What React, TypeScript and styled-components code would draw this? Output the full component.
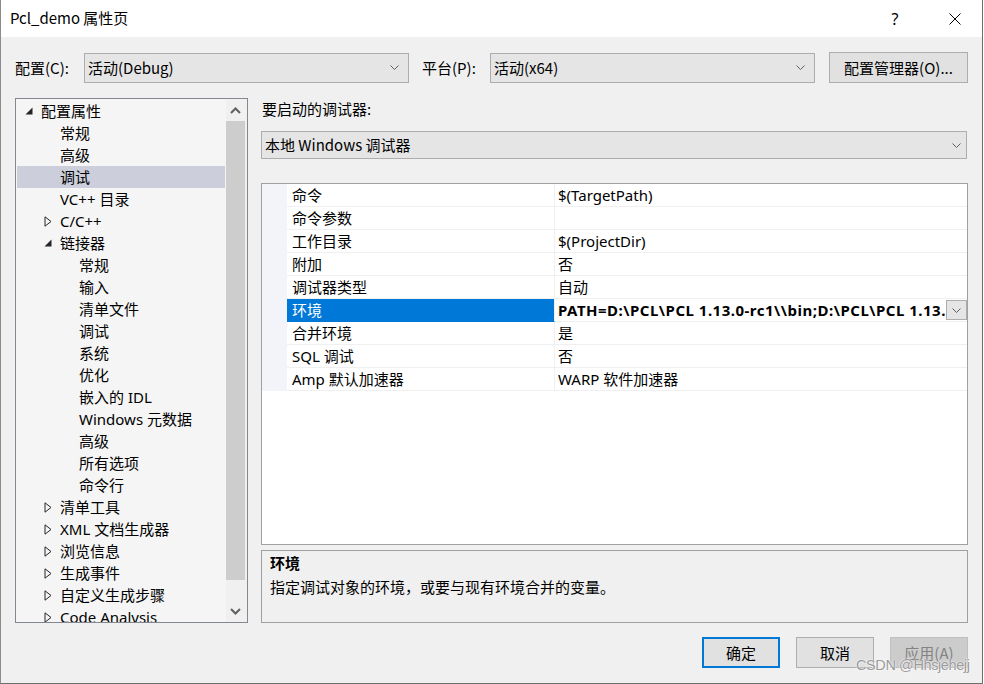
import styled, { createGlobalStyle } from "styled-components";

const GlobalStyle = createGlobalStyle`
  html, body {
    margin: 0;
    padding: 0;
  }
  body {
    width: 984px;
    height: 684px;
    overflow: hidden;
    background: #ffffff;
    font-family: "Noto Sans CJK SC", sans-serif;
    color: #000;
  }
  * {
    box-sizing: border-box;
  }
`;

type TreeNode = {
  label: string;
  level: number;
  arrow?: "open" | "closed";
  selected?: boolean;
};

const treeNodes: TreeNode[] = [
  { label: "配置属性", level: 0, arrow: "open" },
  { label: "常规", level: 1 },
  { label: "高级", level: 1 },
  { label: "调试", level: 1, selected: true },
  { label: "VC++ 目录", level: 1 },
  { label: "C/C++", level: 1, arrow: "closed" },
  { label: "链接器", level: 1, arrow: "open" },
  { label: "常规", level: 2 },
  { label: "输入", level: 2 },
  { label: "清单文件", level: 2 },
  { label: "调试", level: 2 },
  { label: "系统", level: 2 },
  { label: "优化", level: 2 },
  { label: "嵌入的 IDL", level: 2 },
  { label: "Windows 元数据", level: 2 },
  { label: "高级", level: 2 },
  { label: "所有选项", level: 2 },
  { label: "命令行", level: 2 },
  { label: "清单工具", level: 1, arrow: "closed" },
  { label: "XML 文档生成器", level: 1, arrow: "closed" },
  { label: "浏览信息", level: 1, arrow: "closed" },
  { label: "生成事件", level: 1, arrow: "closed" },
  { label: "自定义生成步骤", level: 1, arrow: "closed" },
  { label: "Code Analysis", level: 1, arrow: "closed" },
];

type Prop = { name: string; value: string; selected?: boolean; bold?: boolean };

const props: Prop[] = [
  { name: "命令", value: "$(TargetPath)" },
  { name: "命令参数", value: "" },
  { name: "工作目录", value: "$(ProjectDir)" },
  { name: "附加", value: "否" },
  { name: "调试器类型", value: "自动" },
  {
    name: "环境",
    value:
      "PATH=D:\\PCL\\PCL 1.13.0-rc1\\\\bin;D:\\PCL\\PCL 1.13.0-rc1\\\\3rdParty\\\\FLANN\\\\bin",
    selected: true,
    bold: true,
  },
  { name: "合并环境", value: "是" },
  { name: "SQL 调试", value: "否" },
  { name: "Amp 默认加速器", value: "WARP 软件加速器" },
];

const Chevron = ({ up, bold }: { up?: boolean; bold?: boolean }) => (
  <svg width={bold ? 11 : 9} height={bold ? 7 : 5} viewBox={bold ? "0 0 11 7" : "0 0 9 5"}>
    {bold ? (
      <path
        d={up ? "M1 6 L5.5 1.5 L10 6" : "M1 1 L5.5 5.5 L10 1"}
        stroke="#606060"
        strokeWidth="2"
        fill="none"
      />
    ) : (
      <path d="M0.5 0.5 L4.5 4.5 L8.5 0.5" stroke="#606060" strokeWidth="1" fill="none" />
    )}
  </svg>
);

const Arrow = ({ kind }: { kind?: "open" | "closed" }) => {
  if (kind === "open") {
    return (
      <svg width="8" height="8" viewBox="0 0 8 8">
        <polygon points="7.5,0.5 7.5,7.5 0.5,7.5" fill="#262626" />
      </svg>
    );
  }
  if (kind === "closed") {
    return (
      <svg width="8" height="11" viewBox="0 0 8 11">
        <polygon points="1,0.8 7,5.5 1,10.2" fill="none" stroke="#262626" strokeWidth="1" />
      </svg>
    );
  }
  return null;
};

const App = () => {
  return (
    <>
      <GlobalStyle />
      <Window>
        <TitleBar>
          <Title>Pcl_demo 属性页</Title>
          <CaptionButton $width={66}>?</CaptionButton>
          <CaptionButton $width={54}>
            <svg width="12" height="12" viewBox="0 0 12 12">
              <path d="M0.5 0.5 L11.5 11.5 M11.5 0.5 L0.5 11.5" stroke="#000" strokeWidth="1" />
            </svg>
          </CaptionButton>
        </TitleBar>
        <Body>
          <TopRow>
            <TopLabel $width={69}>配置(C):</TopLabel>
            <Combo $width={325} $height={30}>
              <ComboText>活动(Debug)</ComboText>
              <Chevron />
            </Combo>
            <TopLabel $width={68} $gap={13}>
              平台(P):
            </TopLabel>
            <Combo $width={325} $height={30}>
              <ComboText>活动(x64)</ComboText>
              <Chevron />
            </Combo>
            <ManagerButton>配置管理器(O)...</ManagerButton>
          </TopRow>
          <Main>
            <TreePanel>
              <TreeList>
                {treeNodes.map((n, i) => (
                  <TreeRow key={i} $level={n.level} $selected={!!n.selected}>
                    <ArrowBox>
                      <Arrow kind={n.arrow} />
                    </ArrowBox>
                    <span>{n.label}</span>
                  </TreeRow>
                ))}
              </TreeList>
              <ScrollBar>
                <ScrollButton>
                  <Chevron up bold />
                </ScrollButton>
                <ScrollThumb />
                <ScrollTrack />
                <ScrollButton>
                  <Chevron bold />
                </ScrollButton>
              </ScrollBar>
            </TreePanel>
            <RightColumn>
              <SectionLabel>要启动的调试器:</SectionLabel>
              <DebuggerCombo>
                <ComboText>本地 Windows 调试器</ComboText>
                <Chevron />
              </DebuggerCombo>
              <Grid>
                {props.map((p, i) => (
                  <GridRow key={i}>
                    <GridMargin />
                    <NameCell $selected={!!p.selected}>{p.name}</NameCell>
                    <ValueCell $bold={!!p.bold}>
                      <ValueText>{p.value}</ValueText>
                      {p.selected && (
                        <CellDrop>
                          <Chevron />
                        </CellDrop>
                      )}
                    </ValueCell>
                  </GridRow>
                ))}
              </Grid>
              <Description>
                <DescTitle>环境</DescTitle>
                <DescText>指定调试对象的环境，或要与现有环境合并的变量。</DescText>
              </Description>
            </RightColumn>
          </Main>
          <Footer>
            <DialogButton $variant="default">确定</DialogButton>
            <DialogButton>取消</DialogButton>
            <DialogButton $variant="disabled">应用(A)</DialogButton>
          </Footer>
        </Body>
        <Watermark>CSDN @Hhsjehejj</Watermark>
      </Window>
    </>
  );
};

export default App;

const Window = styled.div`
  position: relative;
  width: 983px;
  height: 684px;
  display: flex;
  flex-direction: column;
  background: #f0f0f0;
  border-left: 1px solid #8c8c8c;
  border-right: 1px solid #6e6e6e;
  border-bottom: 1px solid #6e6e6e;
`;

const TitleBar = styled.div`
  height: 37px;
  flex-shrink: 0;
  display: flex;
  align-items: center;
  background: #ffffff;
`;

const Title = styled.div`
  flex: 1;
  padding-left: 9px;
  font-size: 15px;
  line-height: 20px;
  margin-top: -1px;
`;

const CaptionButton = styled.div<{ $width: number }>`
  width: ${(p) => p.$width}px;
  height: 37px;
  display: flex;
  align-items: center;
  justify-content: center;
  font-family: "Noto Sans", sans-serif;
  font-size: 16px;
  color: #000;
`;

const Body = styled.div`
  flex: 1;
  display: flex;
  flex-direction: column;
  padding: 15px 13px 0 14px;
`;

const TopRow = styled.div`
  height: 31px;
  display: flex;
  align-items: center;
`;

const TopLabel = styled.div<{ $width: number; $gap?: number }>`
  width: ${(p) => p.$width}px;
  margin-left: ${(p) => p.$gap ?? 0}px;
  font-size: 15px;
  line-height: 20px;
  white-space: nowrap;
`;

const Combo = styled.div<{ $width: number; $height: number }>`
  width: ${(p) => p.$width}px;
  height: ${(p) => p.$height}px;
  display: flex;
  align-items: center;
  padding: 0 9px 0 3px;
  background: #e5e5e5;
  border: 1px solid #adadad;
`;

const ComboText = styled.div`
  flex: 1;
  font-size: 15px;
  line-height: 20px;
  white-space: nowrap;
`;

const ManagerButton = styled.div`
  width: 139px;
  height: 31px;
  margin-left: 14px;
  display: flex;
  align-items: center;
  justify-content: center;
  background: #e1e1e1;
  border: 1px solid #adadad;
  font-size: 15px;
`;

const Main = styled.div`
  margin-top: 15px;
  display: flex;
  gap: 13px;
`;

const TreePanel = styled.div`
  width: 233px;
  height: 525px;
  display: flex;
  background: #f5f5f5;
  border: 1px solid #828790;
`;

const TreeList = styled.div`
  flex: 1;
  overflow: hidden;
  padding: 1px 1px 0 1px;
  font-family: "Noto Sans", "Noto Sans CJK SC", sans-serif;
  font-size: 15px;
`;

const TreeRow = styled.div<{ $level: number; $selected: boolean }>`
  height: 22px;
  display: flex;
  align-items: center;
  padding-left: ${(p) => 8 + p.$level * 19}px;
  background: ${(p) => (p.$selected ? "#cccedb" : "transparent")};
  white-space: nowrap;
  line-height: 22px;
`;

const ArrowBox = styled.div`
  width: 16px;
  height: 22px;
  display: flex;
  align-items: center;
  flex-shrink: 0;
`;

const ScrollBar = styled.div`
  width: 21px;
  display: flex;
  flex-direction: column;
  background: #f0f0f0;
  padding-right: 2px;
`;

const ScrollButton = styled.div`
  height: 22px;
  display: flex;
  align-items: center;
  justify-content: center;
`;

const ScrollThumb = styled.div`
  height: 459px;
  background: #cdcdcd;
`;

const ScrollTrack = styled.div`
  flex: 1;
`;

const RightColumn = styled.div`
  width: 707px;
  display: flex;
  flex-direction: column;
`;

const SectionLabel = styled.div`
  height: 22px;
  line-height: 22px;
  font-size: 15px;
  padding-left: 1px;
`;

const DebuggerCombo = styled.div`
  margin-top: 11px;
  width: 706px;
  height: 28px;
  display: flex;
  align-items: center;
  padding: 0 5px 0 3px;
  background: #e5e5e5;
  border: 1px solid #adadad;
`;

const Grid = styled.div`
  margin-top: 24px;
  height: 362px;
  background: #ffffff;
  border: 1px solid #a0a0a0;
  overflow: hidden;
  font-family: "Noto Sans", "Noto Sans CJK SC", sans-serif;
  font-size: 15px;
`;

const GridRow = styled.div`
  height: 23px;
  display: grid;
  grid-template-columns: 25px 268px 1fr;
`;

const GridMargin = styled.div`
  background: #f2f4f9;
`;

const NameCell = styled.div<{ $selected: boolean }>`
  padding-left: 5px;
  line-height: 22px;
  white-space: nowrap;
  border-right: 1px solid #f0f0f0;
  border-bottom: 1px solid ${(p) => (p.$selected ? "#0078d7" : "#f0f0f0")};
  background: ${(p) => (p.$selected ? "#0078d7" : "#ffffff")};
  color: ${(p) => (p.$selected ? "#ffffff" : "#000000")};
`;

const ValueCell = styled.div<{ $bold: boolean }>`
  display: flex;
  align-items: center;
  padding-left: 3px;
  line-height: 22px;
  border-bottom: 1px solid #f0f0f0;
  font-weight: ${(p) => (p.$bold ? 700 : 400)};
  letter-spacing: ${(p) => (p.$bold ? "0.5px" : "0")};
  overflow: hidden;
`;

const ValueText = styled.div`
  flex: 1;
  min-width: 0;
  overflow: hidden;
  white-space: nowrap;
`;

const CellDrop = styled.div`
  width: 21px;
  height: 20px;
  flex-shrink: 0;
  display: flex;
  align-items: center;
  justify-content: center;
  background: #e5e5e5;
  border: 1px solid #adadad;
`;

const Description = styled.div`
  margin-top: 5px;
  height: 73px;
  padding: 1px 8px 0 8px;
  border: 1px solid #a0a0a0;
  background: #f0f0f0;
  font-size: 15px;
`;

const DescTitle = styled.div`
  font-weight: 700;
  line-height: 22px;
`;

const DescText = styled.div`
  margin-top: 2px;
  line-height: 22px;
`;

const Footer = styled.div`
  margin-top: 14px;
  display: flex;
  justify-content: flex-end;
  gap: 16px;
  padding-right: 1px;
`;

const DialogButton = styled.div<{ $variant?: "default" | "disabled" }>`
  width: 78px;
  height: 31px;
  display: flex;
  align-items: center;
  justify-content: center;
  font-size: 15px;
  background: ${(p) => (p.$variant === "disabled" ? "#cccccc" : "#e1e1e1")};
  color: ${(p) => (p.$variant === "disabled" ? "#838383" : "#000000")};
  border: ${(p) =>
    p.$variant === "default"
      ? "2px solid #0078d7"
      : p.$variant === "disabled"
      ? "1px solid #bfbfbf"
      : "1px solid #adadad"};
`;

const Watermark = styled.div`
  position: absolute;
  left: 855px;
  top: 657px;
  font-family: "Liberation Sans", sans-serif;
  font-size: 14.5px;
  color: #9a9a9a;
  letter-spacing: -0.4px;
  text-shadow: 0 0 1px #ffffff, 0 0 2px #ffffff;
  pointer-events: none;
`;
